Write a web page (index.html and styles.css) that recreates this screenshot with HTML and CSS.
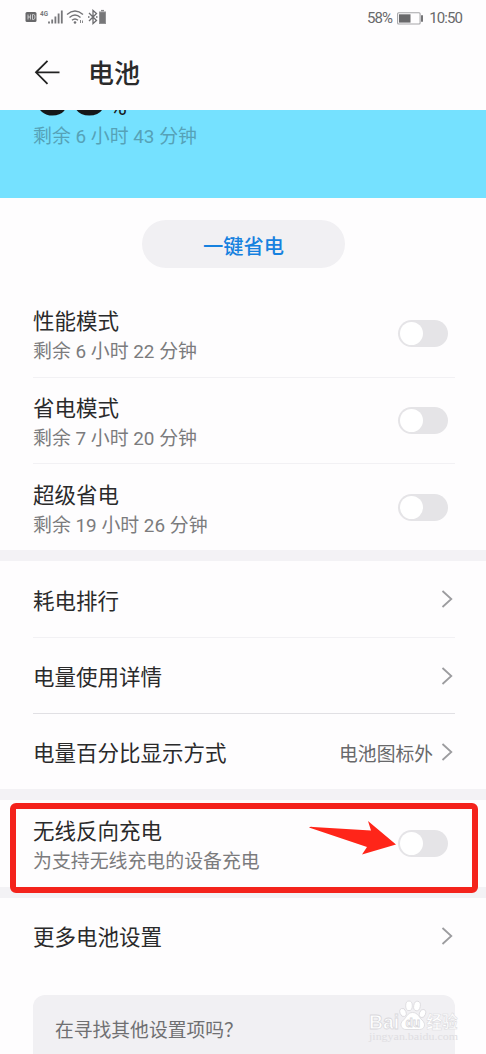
FILE: index.html
```html
<!DOCTYPE html>
<html lang="zh-CN">
<head>
<meta charset="utf-8">
<title>电池</title>
<link rel="stylesheet" href="styles.css">
</head>
<body>
<div class="screen">
  <div class="status">
    <svg class="status-icons" width="84" height="20" viewBox="0 0 84 20">
      <rect x="1.500" y="4" width="11" height="10" rx="1.5" fill="#68686a"/>
      <path d="M4 6.500v5M6.500 6.500v5M4 9H6.500M8.500 6.500v5h1q1.500 0 1.500-2.500T9.500 6.500z" fill="none" stroke="#d5d5d7" stroke-width=".9"/>
      <text x="16" y="8" class="net" textLength="8" lengthAdjust="spacingAndGlyphs">4G</text>
      <path d="M25 15.500v-2M28.200 15.500v-4M31.400 15.500V8.500M34.600 15.500V5.500M37.800 15.500V2.500" stroke="#77777a" stroke-width="1.800"/>
      <path d="M43 6.500Q51 -.5 59 6.500M45.500 9.500Q51 4.500 56.500 9.500M48 12.300Q51 9.700 54 12.300" fill="none" stroke="#737376" stroke-width="1.400"/>
      <circle cx="51" cy="14.500" r="1.300" fill="#737376"/>
      <path d="M56.500 12v3M58.500 12.500v2.500" stroke="#88888a"/>
      <path d="M65 5l7.500 7.500-3.500 3V2.500l3.500 3-7.500 7.500" fill="none" stroke="#6c6c6f" stroke-width="1.300"/>
      <path d="M64 9h1.500M72 9h1.500" stroke="#6c6c6f" stroke-width="1.300"/>
      <rect x="75.500" y="4" width="6" height="11.500" fill="#777779" stroke="#929294"/>
      <path d="M77 2.600h3" stroke="#88888a" stroke-width="1.400"/>
    </svg>
    <div class="status-right">
      <span>58%</span>
      <svg width="27" height="13" viewBox="0 0 27 13">
        <rect x=".6" y=".8" width="22.500" height="11.200" rx="1" fill="none" stroke="#a5a5a8" stroke-width="1.100"/>
        <rect x="2" y="2.300" width="11.500" height="8.300" fill="#69696b"/>
        <path d="M25 3.300v6.400" stroke="#747477" stroke-width="2"/>
      </svg>
      <span>10:50</span>
    </div>
  </div>
  <header class="header">
    <svg width="26" height="26" viewBox="0 0 26 26" fill="none" stroke="#222" stroke-width="1.800"><path d="M13.500 .8L2 12.300l11.500 11.500M2 12.300h23.500"/></svg>
    <h1>电池</h1>
  </header>
  <section class="summary">
    <div class="level"><span class="level-num">58</span><span class="level-unit">%</span></div>
    <p class="remaining">剩余 6 小时 43 分钟</p>
  </section>
  <div class="action"><button class="save">一键省电</button></div>
  <section class="group">
    <div class="row mode"><div class="label"><b>性能模式</b><small>剩余 6 小时 22 分钟</small></div><i class="toggle"></i></div>
    <div class="row mode"><div class="label"><b>省电模式</b><small>剩余 7 小时 20 分钟</small></div><i class="toggle"></i></div>
    <div class="row mode"><div class="label"><b>超级省电</b><small>剩余 19 小时 26 分钟</small></div><i class="toggle"></i></div>
  </section>
  <section class="group links">
    <div class="row link"><b>耗电排行</b><svg class="chevron" viewBox="0 0 12 18"><path d="M1.500 1l8.800 8-8.800 8"/></svg></div>
    <div class="row link strong"><b>电量使用详情</b><svg class="chevron" viewBox="0 0 12 18"><path d="M1.500 1l8.800 8-8.800 8"/></svg></div>
    <div class="row link"><b>电量百分比显示方式</b><span class="value">电池图标外</span><svg class="chevron" viewBox="0 0 12 18"><path d="M1.500 1l8.800 8-8.800 8"/></svg></div>
  </section>
  <section class="group reverse">
    <div class="row mode"><div class="label"><b>无线反向充电</b><small>为支持无线充电的设备充电</small></div><i class="toggle"></i></div>
    <div class="highlight"></div>
    <svg class="pointer" width="88" height="34" viewBox="0 0 88 34"><path d="M0 6.500Q1 5.500 4 6L62 9.500 59 0 87 23.500 53 33.500 58 26z" fill="#ff2519"/></svg>
  </section>
  <section class="group more">
    <div class="row link"><b>更多电池设置</b><svg class="chevron" viewBox="0 0 12 18"><path d="M1.500 1l8.800 8-8.800 8"/></svg></div>
  </section>
  <div class="hint">在寻找其他设置项吗？</div>
  <svg class="watermark" width="100" height="46" viewBox="0 0 100 46">
    <g fill="#fff" stroke="#d9d8dc" stroke-width=".8">
      <text x="2" y="28.500" class="wm-latin" textLength="30" lengthAdjust="spacingAndGlyphs">Bai</text>
      <ellipse cx="36" cy="12.500" rx="3" ry="4.200" transform="rotate(-20 36 12.500)"/>
      <ellipse cx="42" cy="5.800" rx="3.300" ry="4.800"/>
      <ellipse cx="50" cy="6" rx="3.300" ry="4.800" transform="rotate(10 50 6)"/>
      <ellipse cx="55.500" cy="13.500" rx="3" ry="4.200" transform="rotate(20 55.500 13.500)"/>
      <path d="M45.500 12.500c-5 0-6 5-9 7.500-5 4-2 9.500 2.500 9.500h13.500c5 0 7-5.500 2.500-9.500C52 17.500 51 12.500 45.500 12.500z"/>
      <text x="38.500" y="27" class="wm-du">du</text>
      <text x="59.500" y="28" class="wm-cjk" textLength="31" lengthAdjust="spacingAndGlyphs">经验</text>
    </g>
    <text x="2" y="39.500" class="wm-url" textLength="89" lengthAdjust="spacingAndGlyphs">jingyan.baidu.com</text>
  </svg>
</div>
</body>
</html>
```
FILE: styles.css
```css
* { box-sizing: border-box; }
body { margin: 0; }
.screen {
  position: relative;
  width: 486px;
  height: 1054px;
  overflow: hidden;
  background: #fefdfe;
  color: #2a2a2b;
  font-family: Roboto, "Noto Sans CJK SC", sans-serif;
}
.status {
  height: 36px;
  padding: 8px 24px 0;
  display: flex;
  justify-content: space-between;
}
.status-right {
  display: flex;
  align-items: center;
  height: 20px;
  gap: 5px;
  font-size: 15px;
  letter-spacing: -0.9px;
  color: #69696b;
}
.net { font: 700 8px Roboto, sans-serif; fill: #77777a; }
.header {
  height: 74px;
  padding: 0 34px;
  display: flex;
  align-items: center;
  gap: 28px;
}
.header h1 { margin: 0; padding-top: 1px; font-size: 26px; font-weight: 500; line-height: 36px; }
.header svg { flex: none; }
.summary {
  height: 88px;
  padding-left: 33px;
  overflow: hidden;
  background: #75e1ff;
}
.level {
  display: flex;
  align-items: baseline;
  height: 62px;
  margin-top: -49px;
  line-height: 64px;
  color: #151719;
}
.level-num { font-size: 66px; font-weight: 500; }
.level-unit { font-size: 23px; margin-left: 2px; }
.remaining {
  margin: -1px 0 0;
  font-size: 18.9px;
  line-height: 30px;
  color: #56a2b7;
}
.action { height: 92px; padding-top: 22px; text-align: center; }
.save {
  width: 203px;
  height: 48px;
  margin-left: 1px;
  padding: 2px 0 0;
  border: 0;
  border-radius: 24px;
  background: #f1f0f3;
  color: #1681df;
  font: 500 20.3px/40px "Noto Sans CJK SC", sans-serif;
}
.group { padding: 0 31px 0 33px; }
.links, .reverse, .more { border-top: 11px solid #f3f2f5; }
.row { display: flex; align-items: center; }
.row + .row { border-top: 1px solid #f2f1f4; }
.row.strong + .row { border-color: #e1e0e4; }
.row b { font-size: 21.5px; font-weight: 400; line-height: 30px; }
.mode { height: 86.7px; padding-right: 7px; justify-content: space-between; }
.label { display: flex; flex-direction: column; padding-top: 7.4px; }
.label small { font-size: 18.9px; line-height: 30px; color: #7b7b7d; }
.toggle {
  width: 50px;
  height: 27px;
  padding: 2px;
  border-radius: 14px;
  background: #e5e4e7;
}
.toggle::before {
  content: "";
  display: block;
  width: 23px;
  height: 23px;
  border-radius: 50%;
  background: #fff;
}
.link { height: 76px; padding-right: 2px; }
.link b { flex: 1; padding-top: 5px; }
.value { margin-right: 8px; padding-top: 1px; font-size: 18.8px; color: #68686a; }
.chevron {
  width: 12px;
  height: 18px;
  fill: none;
  stroke: #9c9c9f;
  stroke-width: 1.8;
}
.reverse { position: relative; }
.highlight {
  position: absolute;
  left: 10px;
  top: 3px;
  width: 468px;
  height: 90px;
  border: 6px solid #f4231c;
  border-radius: 6px;
  z-index: 1;
}
.pointer { position: absolute; left: 309px; top: 21px; z-index: 2; }
.hint {
  height: 70px;
  margin: 21px 31px 0 33px;
  padding-left: 22px;
  border-radius: 12px;
  background: #f1f0f3;
  color: #6f6f71;
  font-size: 18.8px;
  line-height: 73px;
}
.watermark { position: absolute; left: 367px; top: 1000px; }
.wm-latin { font: 700 20px "Liberation Sans", sans-serif; }
.wm-du { font: 700 12px "Liberation Sans", sans-serif; }
.wm-cjk { font: 700 17px "Noto Sans CJK SC", sans-serif; stroke-width: .5; }
.wm-url { font: 10px "Liberation Serif", serif; fill: #dfdee2; }
```
